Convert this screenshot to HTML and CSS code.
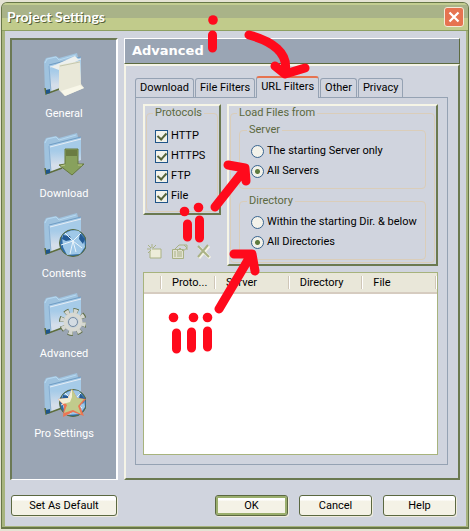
FILE: index.html
```html
<!DOCTYPE html>
<html lang="en">
<head>
<meta charset="utf-8">
<title>Project Settings</title>
<link rel="stylesheet" href="styles.css">
</head>
<body>
<svg class="defs" aria-hidden="true">
  <defs>
    <linearGradient id="sheet" x1="0" y1="0" x2="0" y2="1">
      <stop offset="0.4" stop-color="#a6cbe8"/><stop offset="0.8" stop-color="#d5deea"/>
    </linearGradient>
    <g id="folder">
      <path d="M2 10 4 6l10-2 3 2 18-5 1 4 3 1v20L9 38l-3 5-3-1z" fill="#9fc3df"/>
      <path d="M3 11 5 7l9-2 3 3 17-5" fill="none" stroke="#b9d9ef"/>
      <path d="M7 13 39 5v23L9 40z" fill="url(#sheet)"/>
      <path d="M7 13 39 5" fill="none" stroke="#6f9cc4"/>
      <path d="M8 15 39 7" fill="none" stroke="#e6edf5"/>
      <path d="M7 14 9 40" fill="none" stroke="#86aed1"/>
      <path d="m3 36 1 6 16-6" fill="none" stroke="#5d6d3c" stroke-width="1.5"/>
      <path d="m4 38 4-1v4l-4 1z" fill="#1e558c"/>
    </g>
    <g id="globe">
      <circle cx="31" cy="31" r="13.500" fill="#306ca7" stroke="#586a39"/>
      <path d="M20 24q8-8 17-5l5 7 1 9-5 7-13 1-4-8z" fill="#9fc8e8"/>
      <path d="m21 23 7 1 1 4-5 1-4-2zm17-2 5 6-2 5-4-5z" fill="#245b96"/>
      <path d="m23 21 8 8 8-8m-8 8-3 13m3-13 9 7m-21-3 12-4 3 11" fill="none" stroke="#eaf4fa"/>
    </g>
  </defs>
</svg>

<main class="window">
  <header class="titlebar">
    <h1>Project Settings</h1>
    <button class="close" type="button" aria-label="Close">
      <svg viewBox="0 0 20 20"><path d="m5 5 10 10M15 5 5 15"/></svg>
    </button>
  </header>

  <div class="content">
    <nav class="sidebar">
      <a href="#general">
        <svg viewBox="0 0 44 46"><use href="#folder"/><path d="m9 15 24-11 4 4-20 10z" fill="#edf0ee"/><path d="m17 13 21-4 1 23 3 4-19 8-6-6z" fill="#e9e8d8"/><path d="m18 14 20-4" stroke="#c5c8ae"/><path d="m19 39 19-6 4 3-19 8z" fill="#f8f7e9"/></svg>
        <span>General</span>
      </a>
      <a href="#download">
        <svg viewBox="0 0 44 46"><use href="#folder"/><path d="M23 17h13v15h6L30 43 17 33l6-1z" fill="#88a15d" stroke="#66783f"/><path d="M24 18h11v6H24z" fill="#6a7c42"/><path d="m19 34 4-1m13 0h4" stroke="#bdca8a"/></svg>
        <span>Download</span>
      </a>
      <a href="#contents">
        <svg viewBox="0 0 44 46"><use href="#folder"/><use href="#globe"/></svg>
        <span>Contents</span>
      </a>
      <a href="#advanced">
        <svg viewBox="0 0 44 46"><use href="#folder"/><circle cx="31" cy="30" r="11" fill="none" stroke="#5f6e45" stroke-width="6" stroke-dasharray="4.600 4.040"/><circle cx="31" cy="30" r="11" fill="none" stroke="#d5d7d2" stroke-width="4" stroke-dasharray="4 4.640" stroke-dashoffset="-.3"/><circle cx="31" cy="30" r="7.500" fill="#b8cbdc" stroke="#d8d9d3" stroke-width="4"/><circle cx="31" cy="30" r="4.500" fill="#d4dce3" stroke="#788ba0"/></svg>
        <span>Advanced</span>
      </a>
      <a href="#pro">
        <svg viewBox="0 0 44 46"><use href="#folder"/><use href="#globe"/><path d="m30 17 5 9 9 1-6 7 4 10-11-4-10 5 1-11-6-7 10-1z" fill="#ec7553"/><path d="m30 17 5 9 7 1-6 7 3 8-8-4-9 3 3-8-6-6 8-1z" fill="#c1cb8c"/><path d="m30 17-4 9-10 1 5 5 7-2 2-5z" fill="#f2eed5"/></svg>
        <span>Pro Settings</span>
      </a>
    </nav>

    <section class="panel">
      <h2>Advanced</h2>
      <div class="panel-body">
        <div class="tabs" role="tablist">
          <button type="button" role="tab">Download</button>
          <button type="button" role="tab">File Filters</button>
          <button type="button" role="tab" class="active" aria-selected="true">URL Filters</button>
          <button type="button" role="tab">Other</button>
          <button type="button" role="tab">Privacy</button>
        </div>
        <div class="page" role="tabpanel">
          <div class="groups">
            <div class="left">
              <div class="raised protocols">
                <fieldset>
                  <legend>Protocols</legend>
                  <label><input type="checkbox" checked>HTTP</label>
                  <label><input type="checkbox" checked>HTTPS</label>
                  <label><input type="checkbox" checked>FTP</label>
                  <label><input type="checkbox" checked>File</label>
                </fieldset>
              </div>
              <div class="tools">
                <button type="button" aria-label="New"><svg viewBox="0 0 18 16"><path d="M5 5h9v9H3V7" fill="#edecd9" stroke="#a9b184"/><path d="m1 1 3 3M5 0v4M9 1 6 4M0 5h4M1 9l3-3" stroke="#a9b184"/></svg></button>
                <button type="button" aria-label="Properties"><svg viewBox="0 0 18 16"><path d="M1.500 5.500h11v9h-11z" fill="#e2e2d3" stroke="#a9b184"/><path d="M3 8h2m1 0h5M3 10h2m1 0h5M3 12h2m1 0h5M4 5l4-4h5l3 3-4 3-3-3-3 3M13 1h3v5" fill="none" stroke="#a9b184"/></svg></button>
                <button type="button" aria-label="Delete"><svg viewBox="0 0 18 16"><path d="m4 3 11 11M14 2 4 14" stroke="#f5f4e6" stroke-width="3"/><path d="m3 2 11 11M13 1 3 13" stroke="#a9b184" stroke-width="2"/></svg></button>
              </div>
            </div>
            <div class="raised load">
              <fieldset>
                <legend>Load Files from</legend>
                <fieldset>
                  <legend>Server</legend>
                  <label><input type="radio" name="server">The starting Server only</label>
                  <label><input type="radio" name="server" checked>All Servers</label>
                </fieldset>
                <fieldset>
                  <legend>Directory</legend>
                  <label><input type="radio" name="dir">Within the starting Dir. &amp; below</label>
                  <label><input type="radio" name="dir" checked>All Directories</label>
                </fieldset>
              </fieldset>
            </div>
          </div>
          <div class="list">
            <table>
              <colgroup><col class="c-mark"><col class="c-proto"><col class="c-wide"><col class="c-wide"><col class="c-wide"></colgroup>
              <thead><tr><th></th><th>Proto...</th><th>Server</th><th>Directory</th><th>File</th></tr></thead>
            </table>
          </div>
        </div>
      </div>
    </section>
  </div>

  <footer class="actions">
    <button type="button" class="defaults">Set As Default</button>
    <button type="button" class="primary">OK</button>
    <button type="button">Cancel</button>
    <button type="button">Help</button>
  </footer>
</main>

<svg class="marks" viewBox="0 0 470 531" aria-hidden="true">
  <path d="M212.500 35v13M249 35C272 41 289 53 285 72M275 66l10 8 20-6"/>
  <path d="M187.500 224v13M199.500 220v18M215 207l30-38M228 165l17 3 1 13"/>
  <path d="M176.500 333v16M191.500 332v16M207.500 331v16M219 309l32-54M234 254l18 0 3 17"/>
  <g>
    <circle cx="213" cy="20" r="4.800"/>
    <circle cx="184.500" cy="211.500" r="4.800"/><circle cx="198.500" cy="207.500" r="4.800"/>
    <circle cx="173.500" cy="317.500" r="4.800"/><circle cx="193.500" cy="317.500" r="4.800"/><circle cx="207.500" cy="317.500" r="4.800"/>
  </g>
</svg>
</body>
</html>
```

FILE: styles.css
```css
* { box-sizing: border-box; }

body {
  margin: 0;
  padding: 2px 1px 1px;
  background: #e5e3d4;
  font: 11px/18px Roboto, "Liberation Sans", sans-serif;
  color: #000;
}

button, input { font: inherit; color: inherit; margin: 0; }
h1, h2 { margin: 0; }
.defs { position: absolute; width: 0; height: 0; }

.window {
  background: #d0d4de;
  border: solid #687748;
  border-width: 1px 1px 2px;
  border-radius: 6px 6px 0 0;
  box-shadow: inset 3px 0 #a7b47e, inset -2px 0 #a7b47e, inset 0 -1px #a7b47e;
}

.titlebar {
  display: flex;
  align-items: center;
  justify-content: space-between;
  height: 28px;
  padding: 0 4px 0 5px;
  border-bottom: 1px solid #8d9f62;
  border-radius: 5px 5px 0 0;
  background: linear-gradient(#c3cd91 2px, #a9b388 2px 15px, #c1cb8b 15px);
}
.titlebar h1 {
  font: bold 14px/20px Lato, sans-serif;
  color: #fff;
  text-shadow: 1px 1px #55603a;
}
.close {
  width: 20px;
  height: 20px;
  padding: 0;
  border: 1px solid #f4ead8;
  border-radius: 3px;
  background: #e67350;
}
.close svg { display: block; width: 18px; height: 18px; }
.close path { stroke: #fff; stroke-width: 2.500; fill: none; }

.content { display: flex; gap: 6px; padding: 7px 8px 0 8px; }

.sidebar {
  flex: none;
  width: 108px;
  padding-top: 12px;
  border: solid #fff;
  border-width: 2px 2px 1px;
  border-top-color: #6b7955;
  border-left-color: #6b7955;
  background: #9aa5b4;
}
.sidebar a {
  display: flex;
  flex-direction: column;
  align-items: center;
  gap: 7px;
  height: 80px;
  color: #fff;
  text-decoration: none;
}
.sidebar svg { width: 44px; height: 46px; }

.panel { flex: 1; min-width: 0; }
.panel h2 {
  height: 26px;
  padding-left: 7px;
  border: 1px solid #fff;
  border-right-color: #5d6b40;
  border-bottom-color: #5d6b40;
  background: #9aa5b4;
  color: #fff;
  font: bold 13px/24px "DejaVu Sans", sans-serif;
}
.panel-body {
  padding: 10px 10px 13px 9px;
  border: 2px solid #f5f4e7;
  border-right-color: #6b7950;
  border-bottom-color: #6b7950;
}

.tabs { display: flex; align-items: flex-end; gap: 1px; height: 21px; }
.tabs button {
  height: 19px;
  padding: 0 4px;
  border: 1px solid #95a2b3;
  border-bottom: 0;
  border-radius: 3px 3px 0 0;
  background: #d0d4de;
  line-height: 18px;
  white-space: nowrap;
}
.tabs .active {
  height: 22px;
  margin-bottom: -1px;
  padding-bottom: 2px;
  border-top: 2px solid #e67350;
}

.page { padding: 6px 9px 9px 7px; border: 1px solid #95a2b3; }

.groups { display: flex; gap: 6px; align-items: flex-start; }
.left { flex: none; width: 78px; }
.raised {
  border: 2px solid #f6f5e6;
  border-right-color: #6b7950;
  border-bottom-color: #6b7950;
  padding: 0 1px 1px;
}
.load { flex: 1; min-width: 0; }

fieldset {
  min-width: 0;
  margin: 0;
  padding: 6px 7px 5px 8px;
  border: 1px solid #dacdb9;
  border-radius: 4px;
}
legend { padding: 0 2px; margin-left: -2px; line-height: 14px; color: #5c6940; }
label { display: flex; align-items: center; gap: 3px; height: 20px; white-space: nowrap; }

.load > fieldset { display: grid; gap: 5px; padding: 3px 8px 2px 8px; }
.load fieldset fieldset { padding: 4px 11px 7px; }
.load fieldset fieldset legend { margin-left: -4px; }

input {
  appearance: none;
  flex: none;
  width: 13px;
  height: 13px;
  border: 1px solid #1f5488;
  background: #f3f2ea;
}
input[type="radio"] { border-radius: 50%; border-color: #39648f; }
input[type="radio"]:checked { background: radial-gradient(#5f7a3d 2px, #f3f2ea 3px); }
input[type="checkbox"] { display: grid; place-items: center; }
input[type="checkbox"]:checked::before {
  content: "";
  width: 4px;
  height: 7px;
  margin-bottom: 2px;
  border: solid #56643b;
  border-width: 0 2px 2px 0;
  transform: rotate(42deg);
}

.tools { display: flex; gap: 6px; padding: 29px 0 0 4px; }
.tools button { width: 18px; height: 16px; padding: 0; border: 0; background: none; }
.tools svg { display: block; width: 18px; height: 16px; fill: none; }

.list {
  height: 183px;
  margin-top: 6px;
  border: 1px solid #a7b37d;
  background: #fff;
}
table { width: 100%; table-layout: fixed; border-collapse: separate; border-spacing: 0; background: #e9e7d9; }
th {
  height: 21px;
  padding: 0 0 0 10px;
  border-bottom: 2px solid #d6ccc0;
  background: linear-gradient(#cfc6b7, #cfc6b7) right 1px center / 1px 13px no-repeat,
              linear-gradient(#fff, #fff) right center / 1px 13px no-repeat;
  font-weight: normal;
  text-align: left;
}
.c-mark { width: 18px; }
.c-proto { width: 54px; }

.actions { display: flex; gap: 11px; padding: 15px 12px 11px 9px; }
.actions button {
  width: 73px;
  height: 21px;
  padding: 0;
  border: 1px solid #5b6841;
  border-radius: 3px;
  background: linear-gradient(#fff 4px, #f4f2e6 5px);
  box-shadow: 1px 1px #efecdd;
  line-height: 18px;
}
.actions .defaults { width: 106px; margin-right: auto; }
.actions .primary { box-shadow: inset 0 0 0 2px #9aae6d, 1px 1px #efecdd; }

.marks {
  position: absolute;
  top: 0;
  left: 0;
  width: 470px;
  height: 531px;
  pointer-events: none;
  fill: none;
  stroke: #ff0a1c;
  stroke-width: 9;
  stroke-linecap: round;
  stroke-linejoin: round;
}
.marks g { fill: #ff0a1c; stroke: none; }
```
